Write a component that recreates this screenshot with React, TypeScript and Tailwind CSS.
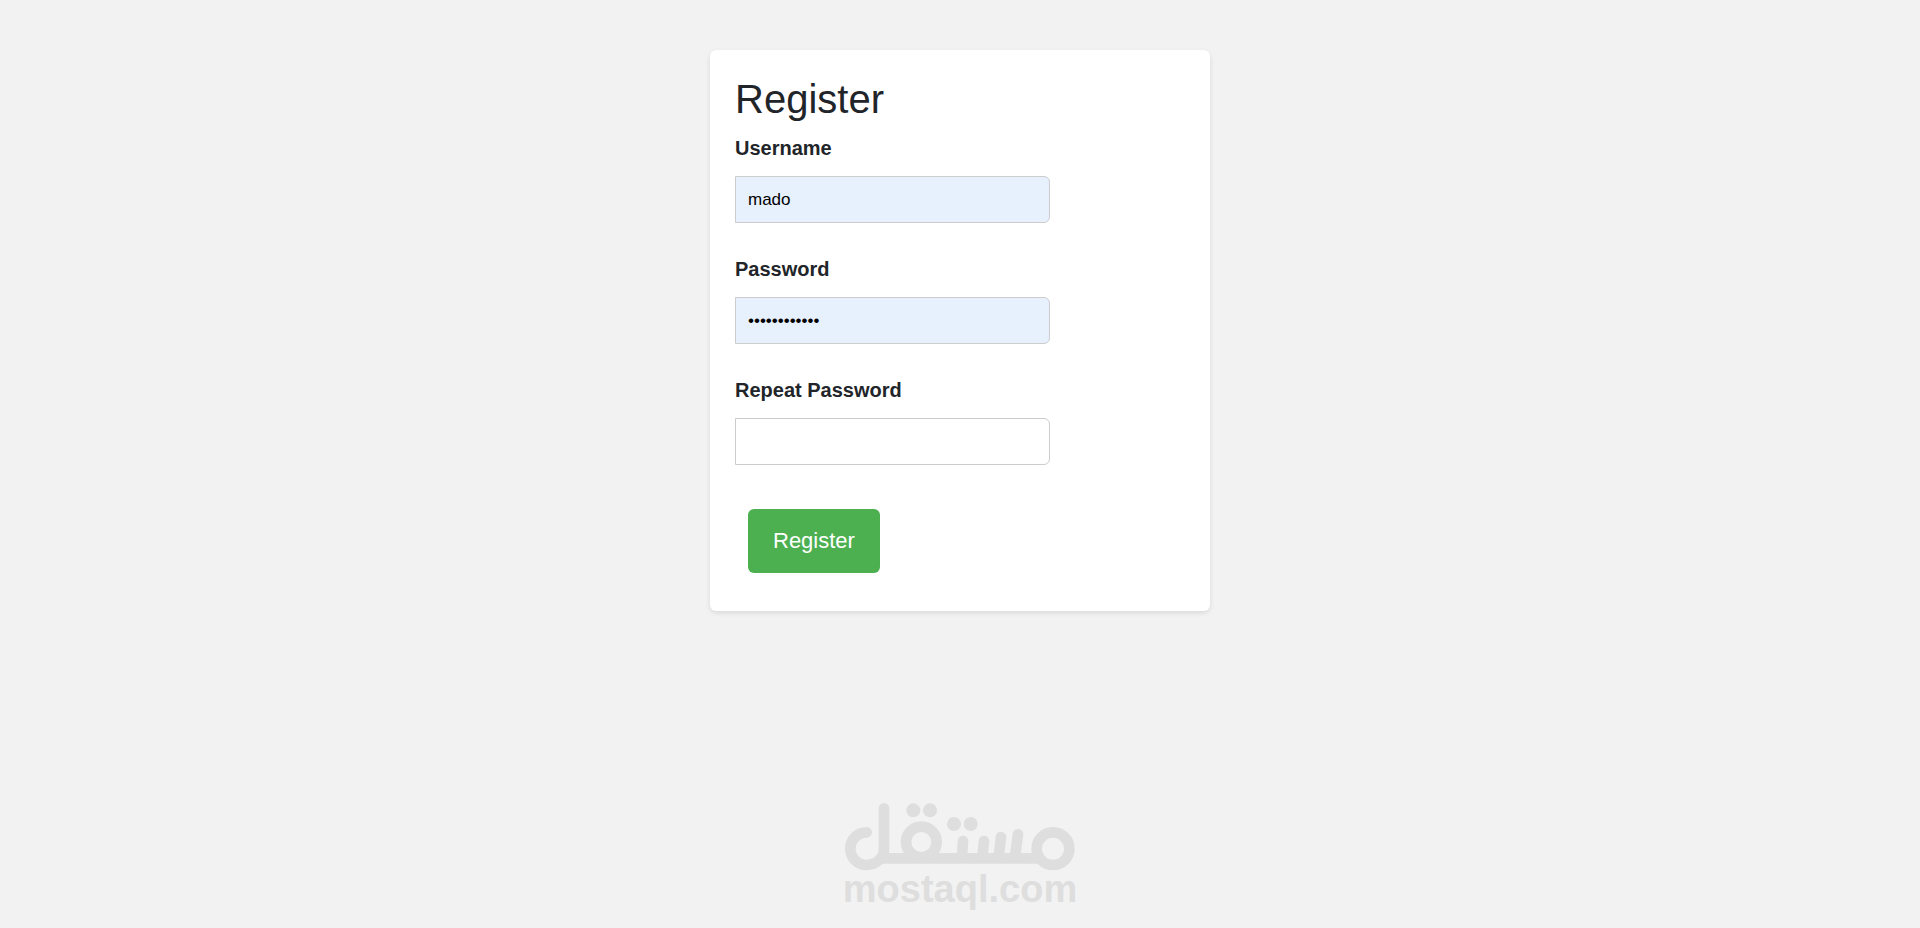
import { useState } from 'react';

interface FieldProps {
  id: string;
  label: string;
  type?: 'text' | 'password';
  value: string;
  filled?: boolean;
  onChange: (value: string) => void;
}

function Field({ id, label, type = 'text', value, filled = false, onChange }: FieldProps) {
  return (
    <div className="pb-[31px]">
      <label htmlFor={id} className="mb-[13px] block text-xl leading-[30px] font-bold">
        {label}
      </label>
      <input
        id={id}
        type={type}
        value={value}
        onChange={(event) => onChange(event.target.value)}
        className={`block h-[47px] w-7/10 rounded-r-md border border-[#ccc] px-3 text-[17px] text-black outline-none focus:border-[#4caf50] ${
          filled ? 'bg-[#e7f1fe]' : 'bg-white'
        }`}
      />
    </div>
  );
}

function Logo() {
  return (
    <div className="flex flex-col items-center gap-0.5 text-[#dedede]">
      <svg
        viewBox="45 39 690 204"
        className="h-[68px] w-[230px]"
        fill="none"
        stroke="currentColor"
        strokeWidth="32"
        strokeLinecap="round"
        role="img"
        aria-label="مستقل"
      >
        <path d="M110 127 A49 49 0 0 0 110 225 A52 49 0 0 0 162 176 V55" />
        <path d="M152 205 H640" strokeLinecap="butt" />
        <circle cx="274" cy="156" r="46" />
        <circle cx="669" cy="176" r="49" />
        <path d="M396 200 L399 153" />
        <path d="M457 200 L462 153" />
        <path d="M506 200 L513 141" />
        <path d="M555 200 L564 133" />
        <g fill="currentColor" stroke="none">
          <circle cx="250" cy="61" r="21" />
          <circle cx="300" cy="61" r="21" />
          <circle cx="372" cy="102" r="21" />
          <circle cx="422" cy="102" r="21" />
        </g>
      </svg>
      <span className="text-[38px] leading-8 font-bold">mostaql.com</span>
    </div>
  );
}

export default function App() {
  const [username, setUsername] = useState('mado');
  const [password, setPassword] = useState('mado12345678');
  const [repeatPassword, setRepeatPassword] = useState('');

  return (
    <div className="flex min-h-screen flex-col items-center justify-between bg-[#f2f2f2] px-4 pt-[50px] pb-[23px] font-['Liberation_Sans',Arial,sans-serif] text-[#212529]">
      <main className="w-full max-w-[500px] rounded-md bg-white p-[25px] shadow-[0_2px_5px_rgba(0,0,0,0.1)]">
        <h1 className="mb-[10px] text-[40px] leading-[48px]">Register</h1>
        <form onSubmit={(event) => event.preventDefault()}>
          <Field id="username" label="Username" value={username} filled onChange={setUsername} />
          <Field
            id="password"
            label="Password"
            type="password"
            value={password}
            filled
            onChange={setPassword}
          />
          <Field
            id="repeat-password"
            label="Repeat Password"
            type="password"
            value={repeatPassword}
            onChange={setRepeatPassword}
          />
          <div className="p-[13px]">
            <button
              type="submit"
              className="block rounded-md bg-[#4caf50] px-[25px] py-4 text-[22px] leading-8 text-white"
            >
              Register
            </button>
          </div>
        </form>
      </main>
      <Logo />
    </div>
  );
}
